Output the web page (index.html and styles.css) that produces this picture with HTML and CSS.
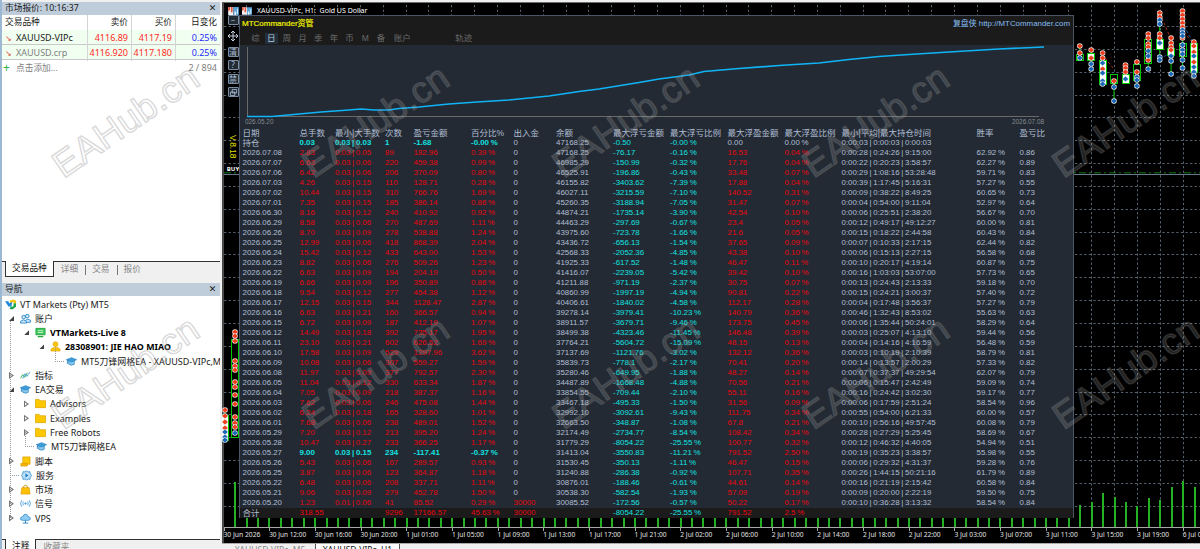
FILE: index.html
```
<!DOCTYPE html>
<html lang="zh">
<head>
  <meta charset="utf-8">
  <title>XAUUSD-VIPc, H1</title>
  <link rel="stylesheet" href="styles.css">
</head>
<body>

  <!-- Icons -->
  <svg class="defs">
    <symbol id="i-logo" viewBox="0 0 12 12"><path d="M0 2.500h3.500L5 5l1-1.500 2-.5-1 5-3 .5z" fill="#1e88d8"/><path d="M5 2l4-1.500L12 2v3l-2.500-.5L9 3 6 4z" fill="#f2c500"/><path d="M12 4.500v4L8 11.500l-3-1L6.500 8 9 8.500l.5-4z" fill="#1fa64a"/></symbol>
    <symbol id="i-users" viewBox="0 0 12 12"><g fill="#cfe6f8" stroke="#2f8ccb"><circle cx="8" cy="3.400" r="2"/><path d="M6 10.500V8q2-2.500 5.500 0v2z"/><circle cx="4" cy="4.500" r="2"/><path d="M.6 11V9q3-3 6.500 0v2z"/></g></symbol>
    <symbol id="i-server" viewBox="0 0 12 12"><path d="M1 1.500h10v7H1z" fill="#3fc65a" stroke="#23a53e"/><path d="M3 4h6M3 6h6" stroke="#c8f2d0"/><path d="M3 10.500h6" stroke="#23a53e" stroke-width="1.400"/></symbol>
    <symbol id="i-user" viewBox="0 0 12 12"><circle cx="6" cy="3.500" r="2.700" fill="#fdc500" stroke="#d89a00" stroke-width=".6"/><path d="M1 11V9Q2 7 6 7t5 2v2z" fill="#fdc500" stroke="#d89a00" stroke-width=".6"/></symbol>
    <symbol id="i-cap" viewBox="0 0 12 12"><path d="M3 5v4q3 2 6 0V5z" fill="#8cc8ee" stroke="#2583c4" stroke-width=".8"/><path d="M.4 4 6 1.800 11.600 4 6 6.600z" fill="#3c9ddb" stroke="#1f7ec0" stroke-width=".7"/><path d="M1.500 4.500v4" stroke="#1f7ec0"/></symbol>
    <symbol id="i-ind" viewBox="0 0 12 12"><path d="M.5 9 3 5l2 3 3-5" fill="none" stroke="#2ea84f"/><path d="M3 9.500 5.500 4l2 3L11 2" fill="none" stroke="#4aa0d8"/></symbol>
    <symbol id="i-folder" viewBox="0 0 12 12"><path d="M.5 1.500h4l1 1.500h6v7.500H.5z" fill="#fdc800" stroke="#dba400" stroke-width=".8"/></symbol>
    <symbol id="i-script" viewBox="0 0 12 12"><path d="M3 1h8v8H3z" fill="#fdc800" stroke="#d99b00" stroke-width=".7"/><path d="M1 8h7v3H1z" fill="#f5b400" stroke="#d99b00" stroke-width=".7"/></symbol>
    <symbol id="i-gear" viewBox="0 0 12 12"><path d="M6 .8l1.400 1.400 2.300-.4.500 2.300L11.500 6l-1.300 1.900-.5 2.300-2.300-.4L6 11.200 4.600 9.800l-2.300.4-.5-2.300L.5 6l1.300-1.900.5-2.300 2.300.4z" fill="#bfe0f6" stroke="#2f8ccb" stroke-width=".9"/><path d="M4.800 3.800 8.200 6 4.800 8.200z" fill="#1c7fc6"/></symbol>
    <symbol id="i-bag" viewBox="0 0 12 12"><path d="M4 5V2.500q2-2.500 4 0V5" fill="none" stroke="#c98b00"/><path d="M2 4h8l1 7H1z" fill="#fdc000" stroke="#d99b00" stroke-width=".7"/></symbol>
    <symbol id="i-signal" viewBox="0 0 12 12"><g fill="none" stroke="#3b97d6" stroke-width=".9"><path d="M1.800 2.500Q-.5 6 1.800 9.500M3.700 4Q2.500 6 3.700 8M10.200 2.500Q12.500 6 10.200 9.500M8.300 4Q9.500 6 8.300 8"/></g><circle cx="6" cy="6" r="1.200" fill="#3b97d6"/></symbol>
    <symbol id="i-cloud" viewBox="0 0 12 12"><path d="M3 8Q0 8 .6 5.500 1.200 4 3 4 4 1 6.500 1.500 8.800 2 9 4q2.500.3 2.400 2.200Q11.200 8 9 8z" fill="#8fccf2" stroke="#2583c4" stroke-width=".8"/><path d="M6 8v3M3 11h6" stroke="#2583c4"/></symbol>
    <symbol id="i-flag" viewBox="0 0 12 9"><path d="M0 0h6v9H0z" fill="#f2f2f2"/><path d="M6 0h6v9H6z" fill="#5aa5d8"/><path d="M0 0h2v4H0zM3 0h2v6H3z" fill="#e2543c"/><path d="M7 5h2v4H7zM10 2h1v6h-1z" fill="#dff0fb"/></symbol>
  </svg>

  <div class="left">
    <div class="caption">市场报价: 10:16:37<span class="close">✕</span></div>
    <div class="quotes">
      <div class="q-row q-head"><span>交易品种</span><span>卖价</span><span>买价</span><span>日变化</span></div>
      <div class="q-row live"><span><i>↘</i>XAUUSD-VIPc</span><span>4116.89</span><span>4117.19</span><span>0.25%</span></div>
      <div class="q-row live dim"><span><i>↘</i>XAUUSD.crp</span><span>4116.920</span><span>4117.180</span><span>0.25%</span></div>
      <div class="q-add"><b>+</b>点击添加...<span>2 / 894</span></div>
    </div>
    <div class="tabs"><span class="on">交易品种</span><span>详细</span><span>交易</span><span>报价</span></div>

    <div class="caption nav">导航<span class="close">✕</span></div>
    <ul class="tree">
      <li class="l0"><svg><use href="#i-logo"/></svg>VT Markets (Pty) MT5</li>
      <li class="l1 open"><svg><use href="#i-users"/></svg>账户</li>
      <li class="l2 open bold"><svg><use href="#i-server"/></svg>VTMarkets-Live 8</li>
      <li class="l3 open bold"><svg><use href="#i-user"/></svg>28308901: JIE HAO MIAO</li>
      <li class="l4 leaf"><svg><use href="#i-cap"/></svg>MT5刀锋网格EA - XAUUSD-VIPc,M</li>
      <li class="l1 shut"><svg><use href="#i-ind"/></svg>指标</li>
      <li class="l1 open"><svg><use href="#i-cap"/></svg>EA交易</li>
      <li class="l2 shut"><svg><use href="#i-folder"/></svg>Advisors</li>
      <li class="l2 shut"><svg><use href="#i-folder"/></svg>Examples</li>
      <li class="l2 shut"><svg><use href="#i-folder"/></svg>Free Robots</li>
      <li class="l2 leaf"><svg><use href="#i-cap"/></svg>MT5刀锋网格EA</li>
      <li class="l1 shut"><svg><use href="#i-script"/></svg>脚本</li>
      <li class="l1 leaf"><svg><use href="#i-gear"/></svg>服务</li>
      <li class="l1 shut"><svg><use href="#i-bag"/></svg>市场</li>
      <li class="l1 shut"><svg><use href="#i-signal"/></svg>信号</li>
      <li class="l1 shut"><svg><use href="#i-cloud"/></svg>VPS</li>
    </ul>
    <div class="tabs bottom"><span class="on">注释</span><span>收藏夹</span></div>
  </div>

  <div class="right">
    <div class="chart">
      <svg class="canvas" id="canvas" width="978" height="541"></svg>

      <div class="tools">
        <svg class="flag"><use href="#i-flag"/></svg>
        <span class="btn">−</span>
        <svg class="move" viewBox="0 0 12 12"><path d="M6 1v10M1 6h10M4 3l2-2 2 2M4 9l2 2 2-2M3 4 1 6l2 2M9 4l2 2-2 2" fill="none" stroke="#c4d0dc"/></svg>
        <span class="btn">清</span>
        <span class="btn">?</span>
        <span class="btn">禁</span>
        <span class="btn"><svg viewBox="0 0 8 8"><path d="M2.500.5h5v4h-5zM.5 3.500h5v4h-5z" fill="#232b35" stroke="#a9bdd2"/></svg></span>
        <span class="ver">V.8.18</span>
        <span class="buy">BUY</span>
      </div>

      <div class="symbol"><svg><use href="#i-flag"/></svg>XAUUSD-VIPc, H1:&nbsp; Gold US Dollar</div>

      <div class="panel">
        <div class="p-head">
          <div class="p-title"><span>MTCommander资管</span><span class="site">复盘侠 http://MTCommander.com</span></div>
          <div class="p-menu">
            <span>综</span><span class="on">日</span><span>周</span><span>月</span><span>季</span><span>年</span><span>币</span><span>M</span><span>备</span><span class="wide">账户</span><span class="last">轨迹</span>
          </div>
        </div>
        <div class="equity">
          <svg width="832" height="74">
            <path class="axis" d="M7.500 2v69.500H799"/>
            <path class="curve" d="M7 71.500h25L59 69l22-2 28-2 12-1 13 1h15l10-1.500 20-1.500 30-3 28-2 32-2 40-4 30-4.500 20-2.500 40-6.500 20-3.500 30-4 15-3.500 35-3 40-3 40-2.500 30-3.500 30-3 30-2 40-2.500 50-3 45-2"/>
          </svg>
          <div class="dates"><span>026.05.20</span><span>2026.07.08</span></div>
        </div>
        <table class="stats" id="stats">
          <colgroup><col class="c1"><col class="c2"><col class="c3"><col class="c4"><col class="c5"><col class="c6"><col class="c7"><col class="c8"><col class="c9"><col class="c10"><col class="c11"><col class="c12"><col class="c13"><col class="c14"><col></colgroup>
        </table>
      </div>
    </div>
    <div class="chart-tabs"><span>XAUUSD-VIPc, M5</span><span class="on">XAUUSD-VIPc, H1</span></div>
  </div>

  <svg class="mark" id="mark" width="1200" height="549"></svg>

  <script>
    // Статистика по дням
    const head = '日期,总手数,最小|大手数,次数,盈亏金额,百分比%,出入金,余额,最大浮亏金额,最大浮亏比例,最大浮盈金额,最大浮盈比例,最小|平均|最大持仓时间,胜率,盈亏比';
    const rows = `持仓,0.03,0.03 | 0.03,1,-1.68,-0.00 %,0,47168.25,-0.50,-0.00 %,0.00,0.00 %,0:00:03 | 0:00:03 | 0:00:03,,
2026.07.08,2.83,0.03 | 0.05,89,182.96,0.39 %,0,47168.25,-76.17,-0.16 %,16.53,0.04 %,0:00:28 | 0:24:26 | 9:15:00,62.92 %,0.86
2026.07.07,6.63,0.03 | 0.06,220,459.38,0.99 %,0,46985.29,-150.99,-0.32 %,17.76,0.04 %,0:00:22 | 0:20:23 | 3:58:57,62.27 %,0.89
2026.07.06,6.42,0.03 | 0.06,206,370.09,0.80 %,0,46525.91,-196.86,-0.43 %,33.48,0.07 %,0:00:29 | 1:08:16 | 53:28:48,59.71 %,0.83
2026.07.03,4.26,0.03 | 0.15,110,128.71,0.28 %,0,46155.82,-3403.62,-7.39 %,17.88,0.04 %,0:00:39 | 1:17:45 | 5:16:31,57.27 %,0.55
2026.07.02,10.44,0.03 | 0.15,310,766.76,1.69 %,0,46027.11,-3215.59,-7.10 %,140.52,0.31 %,0:00:09 | 0:38:22 | 8:49:25,60.65 %,0.73
2026.07.01,7.35,0.03 | 0.15,185,386.14,0.86 %,0,45260.35,-3188.94,-7.05 %,31.47,0.07 %,0:00:04 | 0:54:00 | 9:11:04,52.97 %,0.64
2026.06.30,8.16,0.03 | 0.12,240,410.92,0.92 %,0,44874.21,-1735.14,-3.90 %,42.54,0.10 %,0:00:06 | 0:25:51 | 2:38:20,56.67 %,0.70
2026.06.29,8.58,0.03 | 0.06,270,487.69,1.11 %,0,44463.29,-297.69,-0.67 %,23.4,0.05 %,0:00:12 | 0:49:17 | 49:12:27,60.00 %,0.81
2026.06.26,8.70,0.03 | 0.09,278,538.88,1.24 %,0,43975.60,-723.78,-1.66 %,21.6,0.05 %,0:00:15 | 0:18:22 | 2:44:58,60.43 %,0.84
2026.06.25,12.99,0.03 | 0.06,418,868.39,2.04 %,0,43436.72,-656.13,-1.54 %,37.65,0.09 %,0:00:07 | 0:10:33 | 2:17:15,62.44 %,0.82
2026.06.24,15.42,0.03 | 0.12,433,643.00,1.53 %,0,42568.33,-2052.36,-4.85 %,43.38,0.10 %,0:00:06 | 0:15:13 | 2:27:15,56.58 %,0.68
2026.06.23,8.82,0.03 | 0.06,276,509.26,1.23 %,0,41925.33,-617.52,-1.48 %,46.47,0.11 %,0:00:10 | 0:20:17 | 4:19:14,60.87 %,0.75
2026.06.22,6.63,0.03 | 0.09,194,204.19,0.50 %,0,41416.07,-2239.05,-5.42 %,39.42,0.10 %,0:00:16 | 1:03:03 | 53:07:00,57.73 %,0.65
2026.06.19,6.66,0.03 | 0.09,196,350.89,0.86 %,0,41211.88,-971.19,-2.37 %,30.75,0.07 %,0:00:13 | 0:24:43 | 2:13:33,59.18 %,0.70
2026.06.18,9.54,0.03 | 0.12,277,454.38,1.12 %,0,40860.99,-1997.19,-4.94 %,90.81,0.22 %,0:00:15 | 0:24:21 | 3:00:37,57.40 %,0.72
2026.06.17,12.15,0.03 | 0.15,344,1128.47,2.87 %,0,40406.61,-1840.02,-4.58 %,112.17,0.28 %,0:00:04 | 0:17:48 | 3:56:37,57.27 %,0.79
2026.06.16,6.63,0.03 | 0.21,160,366.57,0.94 %,0,39278.14,-3979.41,-10.23 %,140.79,0.36 %,0:00:46 | 1:32:43 | 8:53:02,55.63 %,0.63
2026.06.15,6.72,0.03 | 0.09,187,412.19,1.07 %,0,38911.57,-3679.71,-9.46 %,173.75,0.45 %,0:00:06 | 1:35:44 | 50:24:01,58.29 %,0.64
2026.06.12,14.49,0.03 | 0.18,392,735.17,1.95 %,0,38499.38,-4323.46,-11.45 %,146.48,0.39 %,0:00:03 | 0:25:07 | 4:13:10,59.44 %,0.56
2026.06.11,23.10,0.03 | 0.21,602,626.52,1.69 %,0,37764.21,-5604.72,-15.09 %,48.15,0.13 %,0:00:04 | 0:14:16 | 4:16:59,56.48 %,0.59
2026.06.10,17.58,0.03 | 0.09,529,1297.96,3.62 %,0,37137.69,-1121.76,-3.02 %,132.12,0.36 %,0:00:03 | 0:10:19 | 2:10:39,58.79 %,0.81
2026.06.09,10.08,0.03 | 0.06,307,559.27,1.59 %,0,35839.73,-778.1,-2.17 %,70.41,0.20 %,0:00:14 | 0:13:57 | 2:00:29,57.33 %,0.82
2026.06.08,11.97,0.03 | 0.09,377,792.57,2.30 %,0,35280.46,-649.95,-1.88 %,48.27,0.14 %,0:00:07 | 0:37:37 | 49:29:54,62.07 %,0.79
2026.06.05,11.04,0.03 | 0.12,330,633.34,1.87 %,0,34487.89,-1668.48,-4.88 %,70.56,0.21 %,0:00:06 | 0:15:47 | 2:42:49,59.09 %,0.74
2026.06.04,7.05,0.03 | 0.09,218,387.37,1.16 %,0,33854.55,-709.44,-2.10 %,55.11,0.16 %,0:00:16 | 0:24:42 | 3:02:30,59.17 %,0.77
2026.06.03,7.62,0.03 | 0.06,246,475.08,1.44 %,0,33467.18,-495.33,-1.50 %,31.56,0.09 %,0:00:06 | 0:17:59 | 2:51:24,58.54 %,0.96
2026.06.02,6.24,0.03 | 0.18,165,328.60,1.01 %,0,32992.10,-3092.61,-9.43 %,111.75,0.34 %,0:00:55 | 0:54:00 | 6:21:33,60.00 %,0.57
2026.06.01,7.68,0.03 | 0.06,238,489.01,1.52 %,0,32663.50,-348.87,-1.08 %,67.8,0.21 %,0:00:10 | 0:56:16 | 49:57:45,60.08 %,0.79
2026.05.29,7.20,0.03 | 0.12,213,395.20,1.24 %,0,32174.49,-2734.77,-8.54 %,108.42,0.34 %,0:00:28 | 0:27:29 | 5:25:45,58.69 %,0.67
2026.05.28,10.47,0.03 | 0.27,233,366.25,1.17 %,0,31779.29,-8054.22,-25.55 %,100.77,0.32 %,0:00:12 | 0:46:32 | 4:40:05,54.94 %,0.51
2026.05.27,9.00,0.03 | 0.15,234,-117.41,-0.37 %,0,31413.04,-3550.83,-11.21 %,791.52,2.50 %,0:00:19 | 0:35:23 | 3:38:57,55.98 %,0.55
2026.05.26,5.43,0.03 | 0.06,167,289.57,0.93 %,0,31530.45,-350.13,-1.11 %,46.47,0.15 %,0:00:06 | 0:29:32 | 4:31:37,59.28 %,0.76
2026.05.25,3.87,0.03 | 0.06,123,364.87,1.18 %,0,31240.88,-286.38,-0.92 %,107.71,0.35 %,0:00:26 | 1:44:15 | 50:21:16,61.79 %,0.89
2026.05.22,6.48,0.03 | 0.06,208,337.71,1.11 %,0,30876.01,-188.46,-0.61 %,44.61,0.14 %,0:00:16 | 0:21:19 | 2:15:42,60.58 %,0.84
2026.05.21,9.06,0.03 | 0.09,279,452.78,1.50 %,0,30538.30,-582.54,-1.93 %,57.09,0.19 %,0:00:09 | 0:20:00 | 2:22:19,59.50 %,0.75
2026.05.20,1.23,0.01 | 0.06,41,85.52,0.29 %,30000,30085.52,-172.56,-0.57 %,50.22,0.17 %,0:00:10 | 0:36:28 | 3:13:32,58.54 %,0.84
合计,318.55,,9296,17166.57,45.63 %,30000,,-8054.22,-25.55 %,791.52,2.5 %,,,`.split('\n');

    function cellClass(cells, i) {
      if (i >= 1 && i <= 5) return cells[4][0] === '-' ? 'loss' : 'gain'; // цвет по прибыли дня
      if (i === 6) return cells[6] === '0' ? '' : 'gain';
      if (i === 8 || i === 9) return 'down';
      if (i === 10 || i === 11) return parseFloat(cells[i]) ? 'gain' : '';
      return '';
    }

    let html = '<tr>' + head.split(',').map(t => `<th>${t}</th>`).join('') + '</tr>';
    rows.forEach(line => {
      const cells = line.split(',');
      html += '<tr>' + cells.map((t, i) => `<td class="${cellClass(cells, i)}">${t}</td>`).join('') + '</tr>';
    });
    document.getElementById('stats').insertAdjacentHTML('beforeend', html);

    // График: сетка, объемы, свечи, ось времени. x и y в координатах окна
    const X0 = 222, Y0 = 2;
    const base = 527;
    let g = '';
    for (let y = 26; y < base - 5; y += 22.85) g += `<path class="grid" d="M2 ${Math.round(y - Y0) + .5}H978"/>`;
    for (let x = 1182.5; x > 230; x -= 22.85) g += `<path class="grid" d="M${Math.round(x - X0) + .5} 3V525"/>`;
    g += '<path class="bid" d="M2 172.500H978"/><path class="ask" d="M2 170.800H978"/>';

    const tall = { 0: 487, 1: 481, 2: 487, 3: 500, 4: 498, 5: 506, 6: 502, 7: 497, 8: 493, 9: 502, 10: 505, 84: 482 };
    for (let i = 0; i < 85; i++) {
      const x = Math.round(1193.5 - i * 11.42 - X0);
      const top = (tall[i] || 512) - Y0;
      g += `<rect class="vol" x="${x}" y="${top}" width="2" height="${base - Y0 - top}"/>`;
    }
    g += '<path class="line" d="M2 525.500H978"/>';

    const times = ['30 Jun 2026', '30 Jun 12:00', '30 Jun 16:00', '30 Jun 20:00', '1 Jul 01:00', '1 Jul 05:00', '1 Jul 09:00', '1 Jul 13:00', '1 Jul 17:00', '1 Jul 21:00', '2 Jul 02:00', '2 Jul 06:00', '2 Jul 10:00', '2 Jul 14:00', '2 Jul 18:00', '2 Jul 22:00', '3 Jul 03:00', '3 Jul 07:00', '3 Jul 11:00', '3 Jul 15:00', '3 Jul 19:00', '6 Jul 00:00'];
    times.forEach((t, i) => {
      const x = 1.5 + i * 45.68;
      g += `<path class="line" d="M${Math.round(x) + .5} 525v4"/><text x="${x}" y="535.300" textLength="${i < 4 ? 37 : 32}" lengthAdjust="spacingAndGlyphs">${t}</text>`;
    });

    // [x, верх, низ тела, заливка, стрелки продажи, стрелки покупки]
    const candles = [
      [1079.8, 54, 60, 0, [46, 53], [58]],
      [1091.2, 53, 60, 1, [50, 58], [64, 69]],
      [1102.6, 60, 84, 1, [53, 58, 69], [63, 73, 81, 84]],
      [1114, 74, 83, 0, [81], [87, 101]],
      [1125.5, 74, 83, 1, [65, 68, 72], [79]],
      [1136.9, 64, 80, 0, [62, 72], [77, 80, 86]],
      [1148.3, 39, 63, 0, [34, 38, 44, 47, 60], [51, 56, 69]],
      [1159.7, 39, 49, 1, [13, 17, 34, 38], [20, 24, 43, 57, 60]],
      [1171.1, 48, 55, 1, [38, 43, 47, 50], [56, 61, 74]],
      [1182.5, 43, 56, 0, [11, 15, 19, 23, 27, 38], [30, 33, 36, 45, 50, 54, 60, 68]],
      [1193.9, 43, 72, 1, [42, 46, 52, 62], [56, 67, 72, 76]],
      [235, 339, 437, 0, [332, 336, 341, 361, 366, 370, 382, 387, 395, 404, 417, 423, 427], [433]],
      [225, 415, 440, 1, [410, 416, 422, 428], [432, 437, 440]]
    ];
    const arrow = (x, y, cls) => `<circle class="halo" cx="${x}" cy="${y}" r="2.800"/><path class="${cls}" d="M${x} ${y - 2.6}l2.800 2.600-2.800 2.600-2.800-2.600z"/>`;
    g += '<path class="deal s" d="M940 16 950 40M962 30 974 45M883 56 891 66"/><path class="deal b" d="M938 58 948 50M962 24 972 42"/>';
    candles.forEach(([cx, top, low, fill, sell, buy]) => {
      const x = cx - X0;
      const all = sell.concat(buy);
      g += `<path class="wick" d="M${x} ${Math.min(...all) - Y0}V${Math.max(...all) - Y0}"/>`;
      g += `<rect class="body ${fill ? 'full' : ''}" x="${Math.round(x) - 3.5}" y="${top - Y0 + .5}" width="7" height="${low - top}"/>`;
      sell.forEach(y => g += arrow(x, y - Y0, 'sell'));
      buy.forEach(y => g += arrow(x, y - Y0, 'buyer'));
    });
    document.getElementById('canvas').innerHTML = g;

    // Водяной знак
    let w = '';
    for (let r = 0; r < 2; r++) {
      for (let c = 0; c < 5; c++) {
        w += `<text transform="translate(${63.5 + c * 250} ${179 + r * 251.5}) rotate(-34.500)" textLength="168">EAHub.cn</text>`;
      }
    }
    document.getElementById('mark').innerHTML = w;
  </script>

</body>
</html>
```
FILE: styles.css
```
* {
  box-sizing: border-box;
}

body {
  margin: 0;
  width: 1200px;
  height: 549px;
  overflow: hidden;
  display: flex;
  background-color: #f0f0f0;
  font-family: "Noto Sans", "Noto Sans CJK SC", sans-serif;
  font-size: 8.7px;
  color: #1a1a1a;
}

.defs {
  position: absolute;
  width: 0;
  height: 0;
}

/* Левая часть */
.left {
  width: 222px;
  flex: none;
  padding: 2px 2px 0 0;
  border-left: 2px solid #9db8d2;
  display: flex;
  flex-direction: column;
}

.caption {
  height: 13px;
  line-height: 12px;
  padding-left: 3px;
  background-color: #bfcddb;
  display: flex;
  justify-content: space-between;
  flex: none;
}

.close {
  width: 15px;
  text-align: center;
  font-family: "DejaVu Sans", sans-serif;
  font-size: 9px;
  font-weight: bold;
}

.quotes {
  height: 247px;
  background-color: #fff;
  border-bottom: 1px solid #333;
}

.q-row {
  display: grid;
  grid-template-columns: 86px 44px 44px 44px;
  height: 15px;
  line-height: 15px;
}

.q-row span {
  text-align: right;
  padding-right: 3px;
  border-right: 1px solid #d4d4d4;
}

.q-row span:first-child {
  text-align: left;
  padding-left: 3px;
}

.q-row span:last-child {
  border-right: none;
}

.live {
  background-color: #f0fff0;
  border-bottom: 1px solid #c8c8c8;
  color: #ff281e;
  font-size: 9px;
}

.live span:first-child {
  color: #1a1a1a;
}

.live.dim span:first-child {
  color: #808080;
}

.live span:last-child {
  color: #2a2aff;
}

.live i {
  display: inline-block;
  width: 11px;
  color: #e0483c;
  font-style: normal;
  font-family: "DejaVu Sans", sans-serif;
  font-size: 8px;
}

.q-add {
  display: flex;
  height: 15px;
  line-height: 16px;
  padding: 0 3px 0 1px;
  color: #808080;
}

.q-add b {
  width: 13px;
  color: #2fb14a;
  font-size: 12px;
  font-weight: normal;
  line-height: 15px;
}

.q-add span {
  margin-left: auto;
  font-size: 9px;
}

.tabs {
  display: flex;
  height: 21px;
  flex: none;
  padding-left: 3px;
  color: #888;
}

.tabs span {
  height: 15px;
  line-height: 14px;
  padding: 0 7px;
  position: relative;
}

.tabs span + span + span::before {
  content: "";
  position: absolute;
  left: 0;
  top: 3px;
  height: 10px;
  border-left: 1px solid #777;
}

.tabs .on {
  margin-top: -1px;
  height: 16px;
  line-height: 15px;
  background-color: #fff;
  border: 1px solid #333;
  border-top: none;
  color: #111;
  padding: 0 6px;
}

/* Навигатор */
.tree {
  list-style: none;
  margin: 0;
  padding: 1px 0 0;
  height: 244px;
  background-color: #fff;
  border-bottom: 1px solid #333;
  position: relative;
  overflow: hidden;
  font-size: 9px;
}

.tree::before {
  content: "";
  position: absolute;
  left: 8px;
  top: 24px;
  height: 200px;
  border-left: 1px dotted #999;
}

.tree li {
  height: 14.28px;
  display: flex;
  align-items: center;
  white-space: nowrap;
  position: relative;
}

.tree li svg {
  width: 11px;
  height: 11px;
  margin-right: 4px;
  flex: none;
}

.tree .bold {
  font-weight: bold;
  font-size: 8.9px;
  color: #000;
}

.l0 { padding-left: 3px; }
.l1 { padding-left: 18px; }
.l2 { padding-left: 33px; }
.l3 { padding-left: 48px; }
.l4 { padding-left: 63px; }

.open::before,
.shut::before {
  content: "";
  width: 5px;
  height: 5px;
  margin-left: -11px;
  margin-right: 6px;
  flex: none;
  position: relative;
  background-color: #444;
  clip-path: polygon(100% 0, 100% 100%, 0 100%);
}

.shut::before {
  height: 7px;
  background-color: #777;
  clip-path: polygon(0 0, 100% 50%, 0 100%, 0 0, 1px 2px, 1px 5px, 3px 50%, 1px 2px);
}

.leaf::before {
  content: "";
  width: 8px;
  height: 14px;
  margin: -14px 2px 0 -10px;
  border: 1px dotted #999;
  border-width: 0 0 1px 1px;
  flex: none;
}

.tabs.bottom {
  height: 9px;
}

.tabs.bottom span {
  line-height: 15px;
}

/* График */
.right {
  width: 978px;
  display: flex;
  flex-direction: column;
  padding-top: 2px;
}

.chart {
  height: 541px;
  background-color: #000;
  border-left: 2px solid #4a4a4a;
  border-top: 1px solid #6b6f6b;
  position: relative;
  flex: none;
}

.canvas {
  position: absolute;
  left: -2px;
  top: -1px;
}

.grid {
  stroke: #56626e;
  stroke-dasharray: 2.300 2.300;
}

.bid { stroke: #67788c; }

.ask {
  stroke: #137a13;
  stroke-dasharray: 7 3 2 3;
}

.vol { fill: #25b025; }
.line { stroke: #a8a8a8; }

.wick,
.body {
  stroke: #00c800;
  fill: #000;
}

.body.full { fill: #fff; }
.halo { fill: #e8e8e8; }
.sell { fill: #f03e1c; }
.buyer { fill: #1a68ba; }

.deal {
  stroke-dasharray: 3 2;
  fill: none;
}

.deal.s { stroke: #a03018; }
.deal.b { stroke: #1c508c; }

.canvas text {
  font-size: 7.3px;
  fill: #e4e4e4;
}

.tools {
  position: absolute;
  left: 3px;
  top: 4px;
  width: 12px;
  display: flex;
  flex-direction: column;
  align-items: center;
}

.flag {
  width: 11px;
  height: 8px;
}

.btn {
  width: 11px;
  height: 10px;
  margin-bottom: 3.5px;
  border: 1px solid #7d8ea1;
  border-radius: 1px;
  background-color: #232b35;
  color: #a9bdd2;
  font-size: 8px;
  line-height: 8px;
  text-align: center;
}

.btn svg {
  width: 7px;
  height: 7px;
  display: block;
  margin: .5px auto;
}

.move {
  width: 12px;
  height: 12px;
  margin: 1px 0 5px;
}

.ver {
  writing-mode: vertical-rl;
  margin-top: 34px;
  color: #e0e000;
  font-family: "Liberation Sans", sans-serif;
  font-size: 8.4px;
  line-height: 10px;
  height: 28px;
}

.buy {
  margin-top: 2px;
  color: #fff;
  font-size: 6px;
  line-height: 9px;
  font-weight: bold;
}

.symbol {
  position: absolute;
  left: 18px;
  top: 3px;
  height: 10px;
  line-height: 10px;
  color: #fff;
  font-size: 7px;
  display: flex;
  align-items: center;
}

.symbol svg {
  width: 10px;
  height: 8px;
  margin-right: 5px;
}

/* Панель статистики */
.panel {
  position: absolute;
  left: 15px;
  top: 12px;
  width: 835px;
  height: 503px;
  border: 1px solid #4a5666;
  background-color: #232a33;
  color: #b0bed4;
  font-family: "Liberation Sans", "Noto Sans CJK SC", sans-serif;
  font-size: 8.5px;
}

.p-head {
  height: 29px;
  background-color: #1b1b1b;
}

.p-title {
  display: flex;
  justify-content: space-between;
  padding: 0 3px 0 2px;
  height: 15px;
  line-height: 15px;
  font-size: 8.4px;
  color: #f0f000;
}

.p-title span:first-child {
  -webkit-text-stroke: .2px #f0f000;
  font-size: 8px;
}

.site {
  color: #86bdf0;
  font-size: 7.9px;
}

.p-menu {
  display: flex;
  padding: 2px 0 0 9px;
  color: #6a6a6a;
}

.p-menu span {
  width: 13px;
  height: 11px;
  line-height: 11px;
  margin-right: 2.700px;
  text-align: center;
}

.p-menu .on {
  background-color: #232e3b;
  color: #b4c8de;
}

.p-menu .wide {
  width: 24px;
}

.p-menu .last {
  width: 24px;
  margin-left: 35px;
}

.equity {
  height: 83px;
}

.equity svg {
  display: block;
}

.axis {
  fill: none;
  stroke: #6a6a6a;
}

.curve {
  fill: none;
  stroke: #10b4f6;
  stroke-width: 1.700;
}

.dates {
  display: flex;
  justify-content: space-between;
  padding: 0 29px 0 5px;
  font-size: 6.4px;
  line-height: 6px;
  color: #868a92;
}

.stats {
  width: 833px;
  table-layout: fixed;
  border-collapse: collapse;
  word-spacing: -.5px;
}

.stats th,
.stats td {
  padding: 0;
  height: 10px;
  line-height: 10px;
  text-align: left;
  font-size: 7.9px;
  white-space: nowrap;
  overflow: visible;
}

.stats th {
  font-size: 8.5px;
  font-weight: normal;
}

.stats td:first-child,
.stats th:first-child {
  padding-left: 2.500px;
}

.stats tr:nth-child(2) td:first-child,
.stats tr:last-child td:first-child {
  font-size: 8.5px;
}

.stats tr:last-child {
  background-color: #1b1b1b;
}

.stats .gain { color: #ea0610; }
.stats .down { color: #12e2e0; }

.stats .loss {
  color: #12e2e0;
  font-weight: bold;
}

.c1 { width: 59.5px; }
.c2 { width: 35.5px; }
.c3 { width: 50px; }
.c4 { width: 28.5px; }
.c5 { width: 57.5px; }
.c6 { width: 42.5px; }
.c7 { width: 42.5px; }
.c8 { width: 57px; }
.c9 { width: 57px; }
.c10 { width: 57.5px; }
.c11 { width: 57px; }
.c12 { width: 57px; }
.c13 { width: 135px; }
.c14 { width: 43px; }

/* Вкладки графиков */
.chart-tabs {
  display: flex;
  height: 6px;
  overflow: hidden;
  padding-left: 3px;
  border-top: 1px solid #aaa;
  font-size: 8.5px;
  line-height: 12px;
  color: #888;
}

.chart-tabs span {
  width: 90px;
  height: 14px;
  text-align: center;
}

.chart-tabs .on {
  width: 85px;
  background-color: #fff;
  border: 1px solid #555;
  border-top: none;
  color: #111;
}

/* Водяной знак */
.mark {
  position: absolute;
  left: 0;
  top: 0;
  pointer-events: none;
}

.mark text {
  font-family: "Liberation Sans", sans-serif;
  font-size: 37px;
  fill: rgba(255, 255, 255, .12);
  stroke: rgba(130, 130, 130, .3);
  stroke-width: 1.500px;
}
```
